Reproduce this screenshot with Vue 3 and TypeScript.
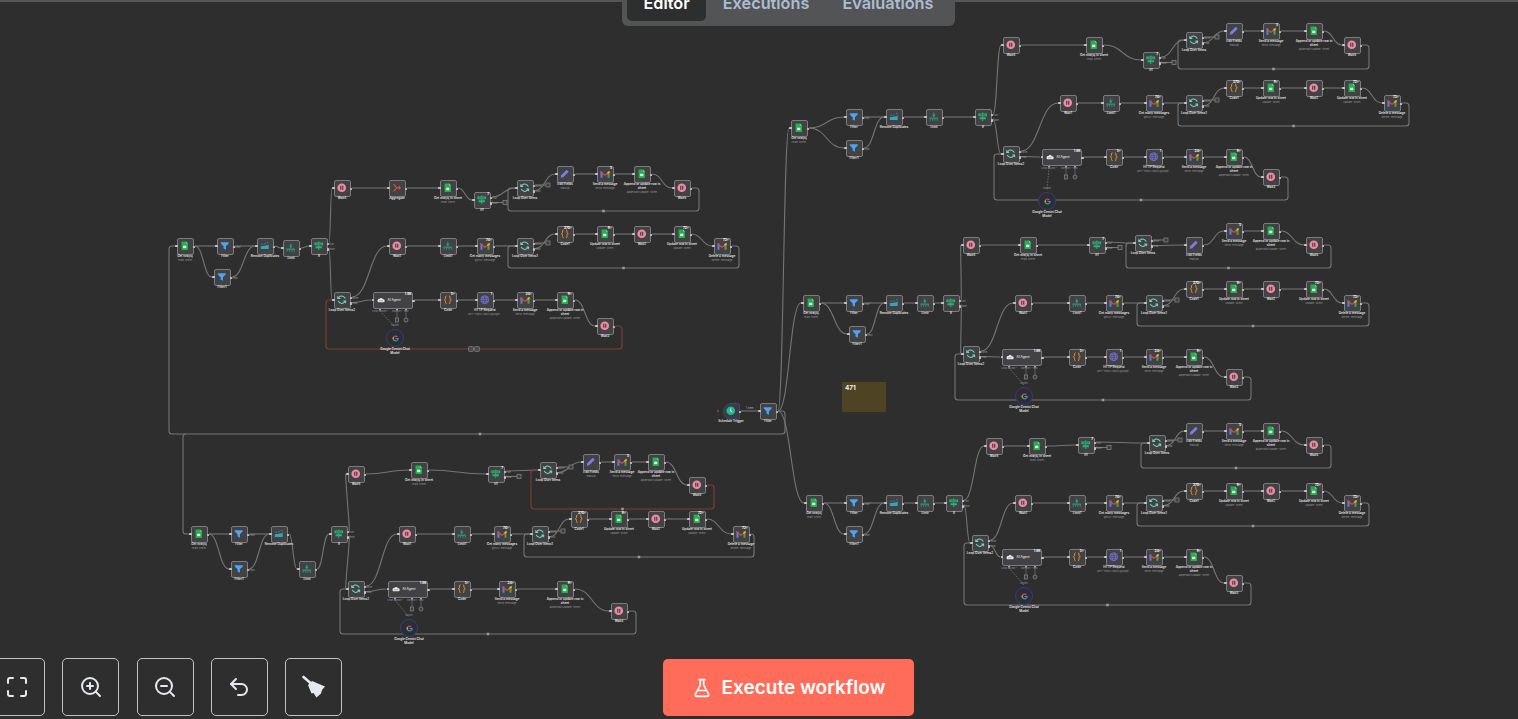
<script setup lang="ts">
type Kind =
  | 'sheet' | 'filter' | 'dedupe' | 'limit' | 'if' | 'wait' | 'aggregate' | 'loop'
  | 'edit' | 'gmail' | 'code' | 'http' | 'agent' | 'chat' | 'trigger'
type Pos = [number, number] | null

interface FlowNode {
  key: string
  kind: Kind
  x: number
  y: number
  w: number
  h: number
  label: string
  sub?: string
  badge?: string
  ports: string[]
}
interface Edge { d: string; cls: string }
interface Ret { r: number; b: number; l: number; red?: boolean; controls?: boolean }
interface Branch { id: string; pos: Pos[]; extra?: [number, number]; rets: [Ret, Ret, Ret] }

const template: { kind: Kind; label: string; sub?: string; badge?: string }[] = [
  { kind: 'sheet', label: 'Get row(s)', sub: 'read: sheet' },
  { kind: 'filter', label: 'Filter' },
  { kind: 'filter', label: 'Filter1' },
  { kind: 'dedupe', label: 'Remove Duplicates' },
  { kind: 'limit', label: 'Limit' },
  { kind: 'if', label: 'If' },
  { kind: 'wait', label: 'Wait4' },
  { kind: 'sheet', label: 'Get row(s) in sheet', sub: 'read: sheet' },
  { kind: 'if', label: 'If1', badge: '7' },
  { kind: 'loop', label: 'Loop Over Items' },
  { kind: 'edit', label: 'Edit Fields', sub: 'manual' },
  { kind: 'gmail', label: 'Send a message', sub: 'send: message', badge: '5' },
  { kind: 'sheet', label: 'Append or update row in sheet', sub: 'appendOrUpdate: sheet' },
  { kind: 'wait', label: 'Wait5' },
  { kind: 'wait', label: 'Wait1' },
  { kind: 'limit', label: 'Limit1' },
  { kind: 'gmail', label: 'Get many messages', sub: 'getAll: message', badge: '74+' },
  { kind: 'loop', label: 'Loop Over Items1' },
  { kind: 'code', label: 'Code1', badge: '270+' },
  { kind: 'sheet', label: 'Update row in sheet', sub: 'update: sheet', badge: '9+' },
  { kind: 'wait', label: 'Wait2' },
  { kind: 'sheet', label: 'Update row in sheet', sub: 'update: sheet', badge: '72+' },
  { kind: 'gmail', label: 'Delete a message', sub: 'delete: message', badge: '73+' },
  { kind: 'loop', label: 'Loop Over Items2' },
  { kind: 'agent', label: 'AI Agent', badge: '1.6K' },
  { kind: 'code', label: 'Code', badge: '5+' },
  { kind: 'http', label: 'HTTP Request', sub: 'GET: https://docs.google...', badge: '1' },
  { kind: 'gmail', label: 'Send a message', sub: 'send: message', badge: '34+' },
  { kind: 'sheet', label: 'Append or update row in sheet', sub: 'appendOrUpdate: sheet', badge: '9+' },
  { kind: 'wait', label: 'Wait3' },
  { kind: 'chat', label: 'Google Gemini Chat Model' },
]

const branches: Branch[] = [
  {
    id: 'a',
    pos: [[185,246],[225,246],[222,277],[265,246],[291,248],[319,246],[342,188],[448,188],[482,200],[525,188],[565,174],[605,174],[642,174],[682,188],[397,246],[448,246],[485,246],[525,246],[565,234],[605,234],[642,234],[682,234],[722,246],[342,300],[393,300],[448,300],[485,300],[525,300],[565,300],[605,326],[395,338]],
    extra: [397, 188],
    rets: [{ r: 699, b: 211, l: 508 }, { r: 739, b: 268, l: 508 }, { r: 622, b: 349, l: 326, red: true, controls: true }],
  },
  {
    id: 'b',
    pos: [[799,128],[854,117],[854,148],[894,117],[934,117],[983,117],[1011,45],[1094,45],[1151,60],[1194,40],[1234,31],[1271,31],[1314,31],[1352,45],[1068,103],[1111,103],[1154,103],[1194,103],[1234,88],[1271,88],[1314,88],[1352,88],[1392,103],[1011,154],[1062,157],[1114,157],[1154,157],[1194,157],[1234,157],[1271,177],[1047,201]],
    rets: [{ r: 1369, b: 69, l: 1178 }, { r: 1409, b: 126, l: 1178 }, { r: 1288, b: 200, l: 994 }],
  },
  {
    id: 'c',
    pos: [[811,303],[854,303],[857,334],[894,303],[925,303],[951,303],[971,245],[1028,245],[1097,245],[1143,243],[1194,245],[1234,231],[1271,231],[1314,245],[1023,303],[1077,303],[1114,303],[1154,303],[1194,289],[1234,289],[1271,289],[1314,289],[1352,303],[971,354],[1022,357],[1077,357],[1114,357],[1154,357],[1194,357],[1234,377],[1024,396]],
    rets: [{ r: 1331, b: 268, l: 1126 }, { r: 1369, b: 326, l: 1137 }, { r: 1251, b: 400, l: 955 }],
  },
  {
    id: 'd',
    pos: [[814,503],[854,503],[854,534],[894,503],[925,503],[954,503],[994,446],[1037,446],[1086,445],[1157,443],[1194,431],[1234,431],[1271,431],[1314,445],[1023,503],[1077,503],[1114,503],[1154,503],[1194,491],[1234,491],[1271,491],[1314,491],[1352,503],[980,543],[1022,557],[1077,557],[1114,557],[1154,557],[1194,557],[1234,583],[1024,596]],
    rets: [{ r: 1331, b: 468, l: 1141 }, { r: 1369, b: 526, l: 1137 }, { r: 1251, b: 605, l: 964 }],
  },
  {
    id: 'e',
    pos: [[199,534],[239,534],[239,569],[279,534],[307,569],[339,534],[356,474],[419,470],[496,474],[548,470],[591,462],[622,462],[656,462],[697,485],[407,534],[462,534],[502,534],[540,534],[579,519],[619,519],[656,519],[697,519],[741,534],[356,589],[408,589],[462,589],null,[507,589],[565,589],[619,611],[409,628]],
    rets: [{ r: 714, b: 509, l: 531, red: true }, { r: 754, b: 557, l: 524 }, { r: 636, b: 634, l: 340 }],
  },
]

const SIZE = 17

function makeNode(key: string, kind: Kind, x: number, y: number, label: string, sub?: string, badge?: string): FlowNode {
  const w = kind === 'agent' ? 40 : SIZE + (kind === 'chat' ? 1 : 0)
  const h = kind === 'chat' ? SIZE + 1 : SIZE
  const ports = kind === 'if' ? ['true', 'false'] : kind === 'loop' ? ['done', 'loop'] : kind === 'filter' ? ['Kept'] : ['']
  return { key, kind, x, y, w, h, label, sub, badge, ports }
}

function outX(n: FlowNode): number { return n.x + n.w / 2 + 1.5 }
function inX(n: FlowNode): number { return n.x - n.w / 2 - 1.5 }
function outY(n: FlowNode, port = 0): number {
  return n.ports.length > 1 ? n.y + (port ? 2.5 : -3) : n.y
}
function curve(x1: number, y1: number, x2: number, y2: number): string {
  const dx = Math.max(Math.abs(x2 - x1) / 2, 1)
  return `M${x1} ${y1}C${x1 + dx} ${y1} ${x2 - dx} ${y2} ${x2} ${y2}`
}
function returnPath(x1: number, y1: number, ret: Ret, x2: number, y2: number): string {
  const c = 3
  return `M${x1} ${y1}H${ret.r - c}Q${ret.r} ${y1} ${ret.r} ${y1 + c}V${ret.b - c}Q${ret.r} ${ret.b} ${ret.r - c} ${ret.b}H${ret.l + c}Q${ret.l} ${ret.b} ${ret.l} ${ret.b - c}V${y2 + c}Q${ret.l} ${y2} ${ret.l + c} ${y2}H${x2}`
}

const nodes: FlowNode[] = []
const edges: Edge[] = []
const stubs: { x1: number; x2: number; y: number }[] = []
const handles: { x: number; y: number }[] = []
const controls: { x: number; y: number }[] = []
const agents: { x: number; y: number }[] = []

for (const br of branches) {
  const list: (FlowNode | null)[] = br.pos.map((p, i) => {
    if (!p) return null
    const t = template[i]
    return makeNode(`${br.id}${i}`, t.kind, p[0], p[1], t.label, t.sub, t.badge)
  })
  const at = (i: number): FlowNode => list[i] as FlowNode
  nodes.push(...(list.filter(Boolean) as FlowNode[]))
  let agg: FlowNode | null = null
  if (br.extra) {
    agg = makeNode(`${br.id}agg`, 'aggregate', br.extra[0], br.extra[1], 'Aggregate')
    nodes.push(agg)
  }
  const link = (a: FlowNode, b: FlowNode, port = 0, cls = ''): void => {
    edges.push({ d: curve(outX(a), outY(a, port), inX(b), b.y), cls })
  }
  const chain = (ids: number[]): void => {
    const seq = ids.map((i) => list[i]).filter(Boolean) as FlowNode[]
    seq.slice(1).forEach((n, i) => link(seq[i], n))
  }
  chain([0, 1, 3, 4, 5])
  link(at(0), at(2))
  link(at(2), at(3))
  link(at(5), at(6), 0)
  link(at(5), at(23), 1)
  if (agg) {
    link(at(6), agg)
    link(agg, at(7))
  } else {
    link(at(6), at(7))
  }
  link(at(7), at(8))
  link(at(8), at(9), 0)
  link(at(9), at(10), 1)
  chain([10, 11, 12, 13])
  link(at(23), at(14), 0)
  chain([14, 15, 16, 17])
  link(at(17), at(18), 1)
  chain([18, 19, 20, 21, 22])
  link(at(23), at(24), 1)
  chain([24, 25, 26, 27, 28, 29])

  const addReturn = (from: FlowNode, to: FlowNode, ret: Ret): void => {
    edges.push({ d: returnPath(outX(from), from.y, ret, inX(to), to.y), cls: ret.red ? 'edge-red' : '' })
    const mid = { x: (ret.r + ret.l) / 2, y: ret.b }
    if (ret.controls) controls.push(mid)
    else handles.push(mid)
  }
  addReturn(at(13), at(9), br.rets[0])
  addReturn(at(22), at(17), br.rets[1])
  addReturn(at(29), at(23), br.rets[2])

  for (const [i, port] of [[8, 1], [9, 0], [17, 0]] as [number, number][]) {
    const n = at(i)
    stubs.push({ x1: outX(n), x2: n.x + 23, y: outY(n, port) })
  }
  const ag = at(24)
  const ch = at(30)
  agents.push({ x: ag.x, y: ag.y })
  edges.push({ d: `M${ag.x - 13} ${ag.y + 11}L${ch.x} ${ch.y - 11}`, cls: 'edge-dash' })
}

const trigger = makeNode('trigger', 'trigger', 731, 411, 'Schedule Trigger')
const mainFilter = makeNode('main', 'filter', 768, 411, 'Filter')
mainFilter.ports = ['']
nodes.push(trigger, mainFilter)
edges.push({ d: curve(outX(trigger), 411, inX(mainFilter), 411), cls: '' })

const fx = outX(mainFilter)
const sheetTo = (id: string): FlowNode => nodes.find((n) => n.key === `${id}0`) as FlowNode
const sa = sheetTo('a')
const se = sheetTo('e')
edges.push({
  d: `M${fx} 411H782Q785 411 785 414V431Q785 434 782 434H172Q169 434 169 431V249Q169 ${sa.y} 172 ${sa.y}H${inX(sa)}`,
  cls: '',
})
edges.push({ d: `M186 434Q183 434 183 437V${se.y - 3}Q183 ${se.y} 186 ${se.y}H${inX(se)}`, cls: '' })
for (const id of ['b', 'c', 'd']) {
  const t = sheetTo(id)
  edges.push({ d: curve(fx, 411, inX(t), t.y), cls: '' })
}
handles.push({ x: 480, y: 434 })

const iconKinds: Kind[] = ['sheet', 'filter', 'dedupe', 'limit', 'if', 'wait', 'aggregate', 'loop', 'edit', 'gmail', 'code', 'http', 'trigger', 'chat']

function hasInput(n: FlowNode): boolean { return n.kind !== 'chat' && n.kind !== 'trigger' }
function hasOutput(n: FlowNode): boolean { return n.kind !== 'chat' }
function boxStyle(n: FlowNode): Record<string, string> {
  return {
    left: `${n.x - n.w / 2}px`,
    top: `${n.y - n.h / 2}px`,
    width: `${n.w}px`,
    height: `${n.h}px`,
  }
}
function portTop(n: FlowNode, i: number): string {
  return `${outY(n, i) - n.y + n.h / 2 - 1.25}px`
}
</script>

<template>
  <div class="editor">
    <div class="header-line"></div>

    <svg class="defs" aria-hidden="true">
      <defs>
        <symbol id="ic-sheet" viewBox="0 0 24 24">
          <path d="M4 1h11l5 5v17H4z" fill="#23b04f" />
          <path d="M15 1l5 5h-5z" fill="#7fdc9b" />
          <rect x="8" y="12" width="8" height="6" fill="#e4f7e9" />
        </symbol>
        <symbol id="ic-filter" viewBox="0 0 24 24">
          <path d="M2 3h20v3.500l-7 7V22l-6-3v-5.500l-7-7z" fill="#4da3f5" />
        </symbol>
        <symbol id="ic-dedupe" viewBox="0 0 24 24">
          <path d="M2 13l17-2 3-3v12H2z" fill="#35a5bd" />
          <path d="M4 8h4M11 7h4M18 4h4" stroke="#35a5bd" stroke-width="2.200" stroke-dasharray="3 2" fill="none" />
        </symbol>
        <symbol id="ic-limit" viewBox="0 0 24 24">
          <path d="M12 2v9" stroke="#2f9e82" stroke-width="2.500" fill="none" />
          <path d="M7.500 7h9L12 13z" fill="#2f9e82" />
          <rect x="1" y="14" width="22" height="3" fill="#2f9e82" />
          <path d="M3 17v5M9 17v5M15 17v5M21 17v5" stroke="#2f9e82" stroke-width="2" fill="none" />
        </symbol>
        <symbol id="ic-if" viewBox="0 0 24 24">
          <path d="M12 1v22" stroke="#25b573" stroke-width="2.400" />
          <path d="M1 4h22v7H1z" fill="#25b573" />
          <path d="M4 13h16v5H4z" fill="#25b573" />
          <path d="M4 7.500h16" stroke="#424244" stroke-width="1.500" />
        </symbol>
        <symbol id="ic-wait" viewBox="0 0 24 24">
          <circle cx="12" cy="12" r="11" fill="#f08aa2" />
          <rect x="8" y="7" width="3" height="10" fill="#424244" />
          <rect x="13" y="7" width="3" height="10" fill="#424244" />
        </symbol>
        <symbol id="ic-aggregate" viewBox="0 0 24 24">
          <path d="M4 3l8 9-8 9M12 12h9M17 8l4 4-4 4" stroke="#e8533f" stroke-width="2.600" fill="none" />
        </symbol>
        <symbol id="ic-loop" viewBox="0 0 24 24">
          <path d="M21 9A9.500 9.500 0 0 0 5 6L2 9M2 3v6h6M3 15a9.500 9.500 0 0 0 16 3l3-3M22 21v-6h-6" stroke="#74d8bf" stroke-width="2.600" fill="none" />
        </symbol>
        <symbol id="ic-edit" viewBox="0 0 24 24">
          <path d="M17 2l5 5L8 21l-6 1 1-6z" fill="#7c7ce8" />
        </symbol>
        <symbol id="ic-gmail" viewBox="0 0 24 24">
          <path d="M1 6h5v15H2.500A1.500 1.500 0 0 1 1 19.500z" fill="#4285f4" />
          <path d="M18 6h5v13.500a1.500 1.500 0 0 1-1.500 1.500H18z" fill="#34a853" />
          <path d="M1 4.500 12 13l11-8.500V9l-11 8L1 9z" fill="#ea4335" />
          <path d="M18 7.500 23 4v5l-5 3.600z" fill="#fbbc04" />
        </symbol>
        <symbol id="ic-code" viewBox="0 0 24 24">
          <path d="M9 2C5 2 7 8 6 10s-3 2-3 2 2 0 3 2-1 8 3 8M15 2c4 0 2 6 3 8s3 2 3 2-2 0-3 2 1 8-3 8" stroke="#f7941d" stroke-width="2.400" fill="none" />
        </symbol>
        <symbol id="ic-http" viewBox="0 0 24 24">
          <g stroke="#7b72dc" stroke-width="2" fill="none">
            <circle cx="12" cy="12" r="10" />
            <ellipse cx="12" cy="12" rx="4.500" ry="10" />
            <path d="M2 12h20M3.500 7h17M3.500 17h17" />
          </g>
        </symbol>
        <symbol id="ic-agent" viewBox="0 0 24 24">
          <path d="M2 13a4 4 0 0 1 4-4h1a6 6 0 0 1 11 1 4.500 4.500 0 0 1 1 9H6a4 4 0 0 1-4-6z" fill="#e9e9ee" />
          <circle cx="9" cy="14" r="1.500" fill="#424244" />
          <circle cx="15" cy="14" r="1.500" fill="#424244" />
        </symbol>
        <symbol id="ic-trigger" viewBox="0 0 24 24">
          <circle cx="12" cy="12" r="11" fill="#22b68f" />
          <path d="M12 6v7l4 2" stroke="#e9fff8" stroke-width="2" fill="none" />
        </symbol>
        <symbol id="ic-chat" viewBox="0 0 24 24">
          <g fill="none" stroke-width="4.200">
            <path d="M5 8A9 9 0 0 1 18.500 6" stroke="#ea4335" />
            <path d="M5 8a9 9 0 0 0 0 8" stroke="#fbbc04" />
            <path d="M5 16a9 9 0 0 0 13.500 2" stroke="#34a853" />
            <path d="M18.500 18A9 9 0 0 0 21 12h-9" stroke="#4285f4" />
          </g>
        </symbol>
      </defs>
    </svg>

    <div class="canvas">
      <svg class="edges" width="1518" height="719">
        <path v-for="(e, i) in edges" :key="i" :d="e.d" class="edge" :class="e.cls" />
        <g v-for="(s, i) in stubs" :key="'s' + i">
          <path :d="`M${s.x1} ${s.y}H${s.x2 - 2}`" class="edge" />
          <rect :x="s.x2 - 2" :y="s.y - 2" width="4" height="4" class="stub-box" />
        </g>
        <rect v-for="(h, i) in handles" :key="'h' + i" :x="h.x - 1.25" :y="h.y - 1.25" width="2.500" height="2.500" class="handle" />
        <g v-for="(c, i) in controls" :key="'c' + i">
          <rect :x="c.x - 5.500" :y="c.y - 2.5" width="5" height="5" rx="1" class="control" />
          <rect :x="c.x + 0.500" :y="c.y - 2.5" width="5" height="5" rx="1" class="control" />
        </g>
        <g v-for="(a, i) in agents" :key="'a' + i">
          <path :d="`M${a.x + 4} ${a.y + 9}V${a.y + 18}M${a.x + 13} ${a.y + 9}V${a.y + 18}`" class="edge thin" />
          <rect :x="a.x + 2.500" :y="a.y + 18" width="3" height="4" class="stub-box" />
          <circle :cx="a.x + 13" :cy="a.y + 20" r="2" class="stub-box" />
          <rect :x="a.x - 14" :y="a.y + 8.500" width="2" height="2" class="dot" />
          <rect :x="a.x + 3" :y="a.y + 8.500" width="2" height="2" class="dot" />
          <rect :x="a.x + 12" :y="a.y + 8.500" width="2" height="2" class="dot" />
        </g>
      </svg>

      <div class="sticky"><span>471</span></div>

      <div
        v-for="n in nodes"
        :key="n.key"
        class="node"
        :class="`node-${n.kind}`"
        :style="boxStyle(n)"
      >
        <svg v-if="iconKinds.includes(n.kind)" class="icon" :class="`icon-${n.kind}`"><use :href="`#ic-${n.kind}`" /></svg>
        <template v-if="n.kind === 'agent'">
          <svg class="icon icon-agent"><use href="#ic-agent" /></svg>
          <span class="agent-name">{{ n.label }}</span>
          <span class="agent-port port-a">Chat Model<i>*</i></span>
          <span class="agent-port port-b">Memory</span>
          <span class="agent-port port-c">Tool</span>
        </template>
        <span v-if="n.badge" class="badge">{{ n.badge }}</span>
        <span v-if="hasInput(n)" class="port port-in"></span>
        <template v-if="hasOutput(n)">
          <span
            v-for="(p, i) in n.ports"
            :key="i"
            class="port port-out"
            :style="{ top: portTop(n, i) }"
          ></span>
          <span
            v-for="(p, i) in n.ports"
            :key="'l' + i"
            class="port-label"
            :style="{ top: portTop(n, i) }"
          >{{ p }}</span>
        </template>
        <span v-if="n.kind === 'chat'" class="chat-port">Model</span>
        <div v-if="n.kind !== 'agent'" class="caption">
          <span class="caption-title">{{ n.label }}</span>
          <span v-if="n.sub" class="caption-sub">{{ n.sub }}</span>
        </div>
      </div>

      <span class="trigger-dot"></span>
      <span class="edge-note">1 item</span>
    </div>

    <nav class="tabs">
      <span class="tab tab-active">Editor</span>
      <span class="tab">Executions</span>
      <span class="tab">Evaluations</span>
    </nav>

    <div class="toolbar">
      <button class="tool" type="button" aria-label="Fit view">
        <svg width="24" height="24" viewBox="0 0 24 24" class="stroke"><path d="M8 3H5a2 2 0 0 0-2 2v3M21 8V5a2 2 0 0 0-2-2h-3M3 16v3a2 2 0 0 0 2 2h3M16 21h3a2 2 0 0 0 2-2v-3" /></svg>
      </button>
      <button class="tool" type="button" aria-label="Zoom in">
        <svg width="24" height="24" viewBox="0 0 24 24" class="stroke"><circle cx="11" cy="11" r="8" /><path d="M21 21l-4.350-4.350M11 8v6M8 11h6" /></svg>
      </button>
      <button class="tool" type="button" aria-label="Zoom out">
        <svg width="24" height="24" viewBox="0 0 24 24" class="stroke"><circle cx="11" cy="11" r="8" /><path d="M21 21l-4.350-4.350M8 11h6" /></svg>
      </button>
      <button class="tool" type="button" aria-label="Reset">
        <svg width="24" height="24" viewBox="0 0 24 24" class="stroke"><path d="M9 14 4 9l5-5" /><path d="M4 9h10.500a5.500 5.500 0 0 1 0 11H11" /></svg>
      </button>
      <button class="tool" type="button" aria-label="Tidy up">
        <svg width="24" height="24" viewBox="0 0 24 24">
          <path d="M1.500 2 8.500 8" stroke="#e6e8f0" stroke-width="2.600" stroke-linecap="round" />
          <path d="M6 10 10 6l13 5.500-3 3.500-1 3.500-4.500 4-3-4.500-2 .5z" fill="#e6e8f0" />
        </svg>
      </button>
    </div>

    <button class="execute" type="button">
      <svg width="20" height="20" viewBox="0 0 24 24" class="flask"><path d="M14 2v6a2 2 0 0 0 .245.960l5.510 10.080A2 2 0 0 1 18 22H6a2 2 0 0 1-1.755-2.960l5.510-10.080A2 2 0 0 0 10 8V2M6.453 15h11.094M8.500 2h7" /></svg>
      <span>Execute workflow</span>
    </button>
  </div>
</template>

<style scoped>
.editor {
  position: relative;
  height: 719px;
  overflow: hidden;
  background: #2e2e2e;
  font-family: Inter, "Liberation Sans", sans-serif;
}
.header-line {
  height: 2px;
  background: #565656;
}
.defs {
  position: absolute;
  width: 0;
  height: 0;
}
.canvas {
  position: absolute;
  inset: 0;
}
.edges {
  position: absolute;
  left: 0;
  top: 0;
}
.edge {
  fill: none;
  stroke: #757575;
  stroke-width: 1.1;
}
.edge.thin {
  stroke-width: 0.7;
}
.edge-red {
  stroke: #7d3f38;
}
.edge-dash {
  stroke-dasharray: 1.500 1.200;
  stroke-width: 0.8;
}
.stub-box {
  fill: #3c3c3e;
  stroke: #8a8a8a;
  stroke-width: 0.7;
}
.handle {
  fill: #9a9a9a;
}
.control {
  fill: #4c4c4e;
  stroke: #808080;
  stroke-width: 0.7;
}
.dot {
  fill: #a0a0a8;
}
.node {
  position: absolute;
  box-sizing: border-box;
  display: flex;
  align-items: center;
  justify-content: center;
  background: #424244;
  border: 1px solid #7c7c80;
  border-radius: 2px;
  color: #fff;
}
.node-agent {
  justify-content: flex-start;
  padding-left: 3px;
  gap: 2.500px;
}
.node-chat {
  background: #2b2c3c;
  border-color: #3b3f62;
  border-radius: 50%;
}
.node-trigger {
  background: #3b3b48;
  border-color: #45465c;
  border-radius: 8px 2px 2px 8px;
}
.icon {
  width: 9.5px;
  height: 9.5px;
  flex: none;
}
.icon-gmail {
  width: 10px;
  height: 10px;
}
.icon-chat {
  width: 7px;
  height: 7px;
}
.icon-agent {
  width: 8px;
  height: 8px;
}
.agent-name {
  font-size: 3.2px;
  font-weight: 500;
  color: #e8e8e8;
}
.agent-port {
  position: absolute;
  top: 17.5px;
  font-size: 2.6px;
  line-height: 3px;
  color: #8d8fa6;
  white-space: nowrap;
  transform: translateX(-50%);
}
.agent-port i {
  color: #e5534b;
  font-style: normal;
}
.port-a {
  left: 6px;
}
.port-b {
  left: 23px;
}
.port-c {
  left: 32px;
}
.chat-port {
  position: absolute;
  top: -6px;
  left: 50%;
  transform: translateX(-50%);
  font-size: 2.6px;
  line-height: 3px;
  color: #8d8fa6;
}
.badge {
  position: absolute;
  top: 0;
  right: 0.5px;
  font-size: 3.2px;
  line-height: 3.5px;
  font-weight: 700;
  color: #fff;
  white-space: nowrap;
}
.port {
  position: absolute;
  width: 2.5px;
  height: 2.5px;
  background: #c4c4c6;
  border-radius: 0.4px;
}
.port-in {
  left: -2.5px;
  top: calc(50% - 1.25px);
}
.port-out {
  right: -2.5px;
}
.port-label {
  position: absolute;
  left: calc(100% + 2.5px);
  font-size: 2.6px;
  line-height: 2.5px;
  color: #9a9aa2;
}
.caption {
  position: absolute;
  top: calc(100% + 0.5px);
  left: 50%;
  width: 38px;
  transform: translateX(-50%);
  display: flex;
  flex-direction: column;
  align-items: center;
  text-align: center;
  line-height: 4px;
}
.caption-title {
  font-size: 3.1px;
  font-weight: 600;
  color: #e8e8e8;
}
.caption-sub {
  font-size: 2.7px;
  color: #98989c;
  white-space: nowrap;
}
.sticky {
  position: absolute;
  left: 842px;
  top: 382px;
  width: 44px;
  height: 30px;
  box-sizing: border-box;
  padding: 3px 3px;
  background: #4e4423;
  border-radius: 1px;
  font-size: 6.4px;
  line-height: 7px;
  font-weight: 700;
  color: #f4f4f4;
}
.trigger-dot {
  position: absolute;
  left: 717px;
  top: 410px;
  width: 2px;
  height: 2px;
  background: #9a4a42;
  border-radius: 50%;
}
.edge-note {
  position: absolute;
  left: 746px;
  top: 406.5px;
  font-size: 2.8px;
  line-height: 3px;
  color: #a6b4c6;
}
.tabs {
  position: absolute;
  left: 622px;
  top: -22px;
  display: flex;
  padding: 5px;
  background: #535456;
  border-radius: 6px;
}
.tab {
  box-sizing: border-box;
  height: 38px;
  padding: 1px 16.5px 0;
  display: flex;
  align-items: center;
  border-radius: 5px;
  font-size: 16.3px;
  font-weight: 600;
  color: #aebcd2;
}
.tab-active {
  background: #2d2e2e;
  color: #fff;
}
.toolbar {
  position: absolute;
  left: -12px;
  top: 658px;
  display: flex;
  gap: 17.25px;
}
.tool {
  box-sizing: border-box;
  width: 57px;
  height: 58px;
  display: flex;
  align-items: center;
  justify-content: center;
  padding: 0;
  background: transparent;
  border: 1px solid #c2c2c6;
  border-radius: 5px;
}
.stroke {
  fill: none;
  stroke: #e6e8f0;
  stroke-width: 2;
  stroke-linecap: round;
  stroke-linejoin: round;
}
.execute {
  position: absolute;
  left: 663px;
  top: 659px;
  box-sizing: border-box;
  width: 251px;
  height: 57px;
  display: flex;
  align-items: center;
  justify-content: center;
  gap: 10px;
  padding: 0;
  background: #ff6d5a;
  border: none;
  border-radius: 5px;
  color: #fff;
  font-family: inherit;
  font-size: 19px;
  font-weight: 600;
}
.flask {
  fill: none;
  stroke: #fff;
  stroke-width: 2;
  stroke-linecap: round;
  stroke-linejoin: round;
}
</style>

<style>
html,
body {
  background: #2e2e2e;
  overflow: hidden;
}
</style>
